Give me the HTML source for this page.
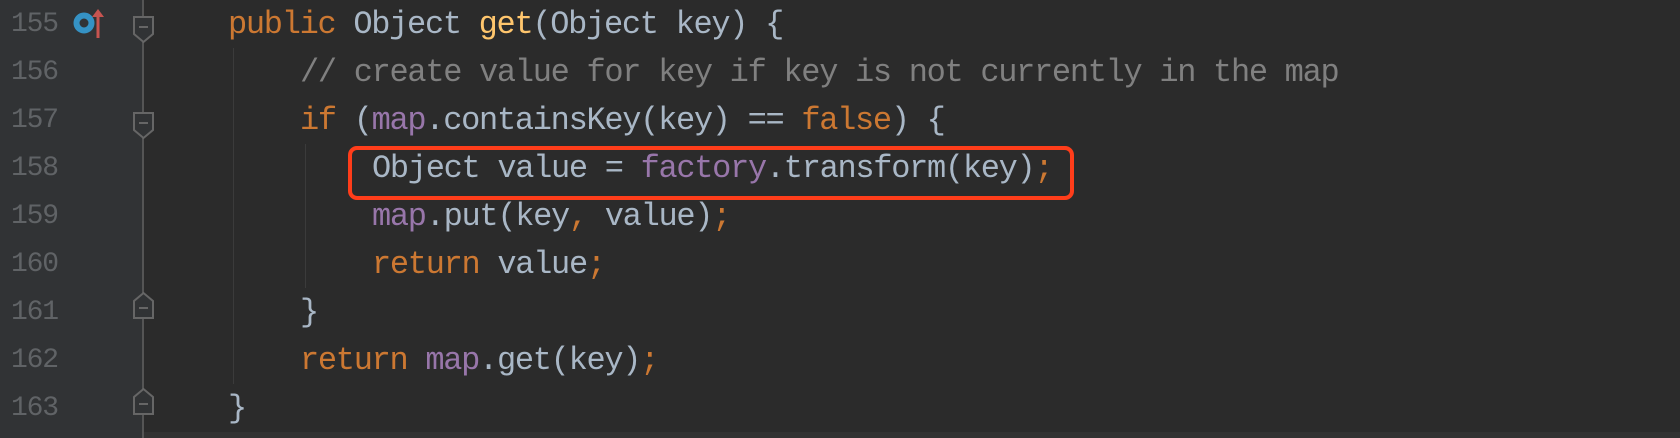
<!DOCTYPE html>
<html><head><style>
html,body{margin:0;padding:0}
body{width:1680px;height:438px;background:#2b2b2b;position:relative;overflow:hidden;font-family:"Liberation Mono",monospace}
.gut{position:absolute;left:0;top:0;width:143px;height:438px;background:#313335}
.bot{position:absolute;left:143px;top:432px;width:1537px;height:6px;background:#323232}
.ln{position:absolute;left:11px;width:70px;height:48px;line-height:48px;font-size:28px;color:#606366;letter-spacing:-1.2px}
.code{position:absolute;left:0;height:48px;line-height:48px;font-size:32px;letter-spacing:-1.3px;color:#a9b7c6;white-space:pre}
.k{color:#cc7832}.c{color:#808080}.p{color:#9876aa}.m{color:#ffc66d}
.guide{position:absolute;width:1px;background:#3b3b3b}
.box{position:absolute;left:348px;top:146px;width:718px;height:46px;border:4px solid #ff3d1a;border-radius:9px}
</style></head><body>
<div class="gut"></div>
<div class="bot"></div>
<svg style="position:absolute;left:0;top:0" width="160" height="438">
<line x1="143" y1="0" x2="143" y2="438" stroke="#555" stroke-width="2"/>
<g fill="#313335" stroke="#666" stroke-width="2">
<path d="M134 17h19v17l-9.5 8l-9.5-8z"/><line x1="139" y1="27" x2="148" y2="27"/>
<path d="M134 113h19v17l-9.5 8l-9.5-8z"/><line x1="139" y1="123" x2="148" y2="123"/>
<path d="M134 318h19v-17l-9.5-8l-9.5 8z"/><line x1="139" y1="308" x2="148" y2="308"/>
<path d="M134 414h19v-17l-9.5-8l-9.5 8z"/><line x1="139" y1="404" x2="148" y2="404"/>
</g>
<circle cx="84" cy="23" r="7.5" fill="none" stroke="#3592c4" stroke-width="6"/>
<line x1="98" y1="14" x2="98" y2="38" stroke="#c75450" stroke-width="3"/>
<path d="M92 17l6-8l6 8z" fill="#c75450"/>
</svg>
<div class="guide" style="left:233px;top:48px;height:336px"></div>
<div class="guide" style="left:305px;top:144px;height:144px"></div>
<div class="ln" style="top:1px">155</div>
<div class="ln" style="top:49px">156</div>
<div class="ln" style="top:97px">157</div>
<div class="ln" style="top:145px">158</div>
<div class="ln" style="top:193px">159</div>
<div class="ln" style="top:241px">160</div>
<div class="ln" style="top:289px">161</div>
<div class="ln" style="top:337px">162</div>
<div class="ln" style="top:385px">163</div>
<div class="code" style="left:228px;top:1px"><span class="k">public</span> Object <span class="m">get</span>(Object key) {</div>
<div class="code" style="left:300px;top:49px"><span class="c">// create value for key if key is not currently in the map</span></div>
<div class="code" style="left:300px;top:97px"><span class="k">if</span> (<span class="p">map</span>.containsKey(key) == <span class="k">false</span>) {</div>
<div class="code" style="left:372px;top:145px">Object value = <span class="p">factory</span>.transform(key)<span class="k">;</span></div>
<div class="code" style="left:372px;top:193px"><span class="p">map</span>.put(key<span class="k">,</span> value)<span class="k">;</span></div>
<div class="code" style="left:372px;top:241px"><span class="k">return</span> value<span class="k">;</span></div>
<div class="code" style="left:300px;top:289px">}</div>
<div class="code" style="left:300px;top:337px"><span class="k">return</span> <span class="p">map</span>.get(key)<span class="k">;</span></div>
<div class="code" style="left:228px;top:385px">}</div>
<div class="box"></div>
</body></html>
